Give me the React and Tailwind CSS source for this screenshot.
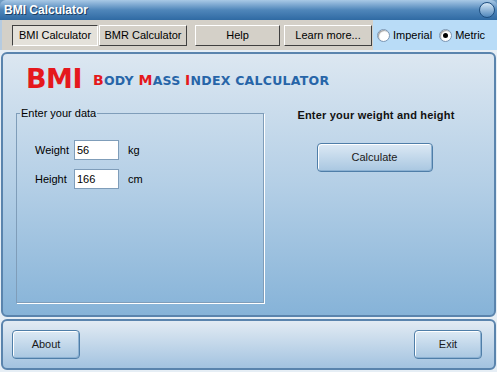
import { useState } from 'react'

const ui = { fontFamily: 'Tahoma, "Liberation Sans", Arial, sans-serif' }
const title = { fontFamily: 'Verdana, "DejaVu Sans", sans-serif' }

const ToolButton = ({ label, pressed, className = '' }) => (
    <button
        className={`h-[21px] text-[11px] text-black bg-[#d4d0c8] border ${
            pressed
                ? 'border-t-[#404040] border-l-[#404040] border-b-white border-r-white bg-[#e4e1da]'
                : 'border-t-white border-l-white border-b-[#404040] border-r-[#404040]'
        } ${className}`}
    >
        {label}
    </button>
)

const GlassButton = ({ label, className = '' }) => (
    <button
        className={`h-[29px] rounded-[4px] border border-[#4f7ea8] bg-gradient-to-b from-[#dce9f4] to-[#a9c7e1] text-[11px] text-[#1a1a1a] shadow-[inset_1px_1px_0_#ffffff,inset_-1px_-1px_0_#8cb1d2] ${className}`}
    >
        {label}
    </button>
)

const Radio = ({ label, checked }) => (
    <label className="flex items-center gap-[3px] text-[11px] text-black">
        <span className="w-[13px] h-[13px] rounded-full bg-white border border-[#7a96b4] flex items-center justify-center shadow-[inset_1px_1px_1px_#a0a0a0]">
            {checked && <span className="w-[5px] h-[5px] rounded-full bg-black" />}
        </span>
        {label}
    </label>
)

export default function App() {
    const [weight, setWeight] = useState('56')
    const [height, setHeight] = useState('166')

    return (
        <div style={ui} className="w-[497px] h-[372px] flex flex-col bg-[#6f9cc4] overflow-hidden">
            {/* Title bar */}
            <div className="h-[20px] shrink-0 flex items-center justify-between pl-[4px] pr-[2px] bg-gradient-to-b from-[#a9c9e6] via-[#4f86ba] to-[#2f6aa3] rounded-t-[6px]">
                <span className="text-[12px] font-bold text-white [text-shadow:1px_1px_0_#1d3f63]">BMI Calculator</span>
                <span className="w-[16px] h-[16px] rounded-full bg-gradient-to-b from-[#d6e8f6] to-[#4f87bb] border border-[#1f4f80]" />
            </div>

            {/* Toolbar */}
            <div className="h-[30px] shrink-0 flex bg-[#d4d0c8] border-l-2 border-[#b6cbe0]">
                <div className="flex-1 flex items-center pl-[10px] pt-[1px]">
                    <ToolButton label="BMI Calculator" pressed className="w-[86px]" />
                    <ToolButton label="BMR Calculator" className="w-[88px] ml-[1px]" />
                    <ToolButton label="Help" className="w-[85px] ml-[8px]" />
                    <ToolButton label="Learn more..." className="w-[88px] ml-[4px]" />
                </div>
                <div className="w-[124px] flex items-center gap-[7px] pl-[4px] bg-[#b9dcf7]">
                    <Radio label="Imperial" />
                    <Radio label="Metric" checked />
                </div>
            </div>

            {/* Main panel */}
            <div className="flex-1 flex flex-col bg-[#e6eef5] pt-[2px] px-[1px]">
                <div className="flex-1 rounded-[6px] border-2 border-[#5a84ad] bg-gradient-to-b from-[#dce7f1] via-[#b4cfe6] to-[#86b3d8] flex flex-col px-[13px] pt-[8px] pb-[12px]">
                    <div className="flex items-end gap-[11px] pl-[10px] h-[30px]" style={title}>
                        <span className="text-[27px] leading-none font-bold text-[#e5181d] tracking-[-0.5px]">BMI</span>
                        <span className="text-[12.5px] font-bold text-[#2765a8] pb-[1px] tracking-[0.25px]">
                            <span className="text-[#e5181d] text-[14px]">B</span>ODY{' '}
                            <span className="text-[#e5181d] text-[14px]">M</span>ASS{' '}
                            <span className="text-[#e5181d] text-[14px]">I</span>NDEX CALCULATOR
                        </span>
                    </div>

                    <div className="flex-1 flex mt-[13px]">
                        {/* Group box */}
                        <fieldset className="w-[248px] border border-[#7f9db9] shadow-[1px_1px_0_#ffffff] px-[18px] pt-[18px] m-0">
                            <legend className="text-[11px] text-black px-[1px] -ml-[15px]">Enter your data</legend>
                            <div className="flex items-center h-[21px]">
                                <span className="w-[39px] text-[11px] text-black">Weight</span>
                                <input
                                    value={weight}
                                    onChange={(e) => setWeight(e.target.value)}
                                    className="w-[45px] h-[20px] bg-white border border-[#7f9db9] text-[11px] px-[2px] outline-none"
                                />
                                <span className="ml-[9px] text-[11px] text-black">kg</span>
                            </div>
                            <div className="flex items-center h-[21px] mt-[8px]">
                                <span className="w-[39px] text-[11px] text-black">Height</span>
                                <input
                                    value={height}
                                    onChange={(e) => setHeight(e.target.value)}
                                    className="w-[45px] h-[20px] bg-white border border-[#7f9db9] text-[11px] px-[2px] outline-none"
                                />
                                <span className="ml-[9px] text-[11px] text-black">cm</span>
                            </div>
                        </fieldset>

                        {/* Right side */}
                        <div className="flex-1 flex flex-col items-center pt-[2px]">
                            <p className="text-[11px] font-bold text-[#111] ml-[7px] tracking-[0.2px]">Enter your weight and height</p>
                            <GlassButton label="Calculate" className="w-[116px] mt-[19px] ml-[4px]" />
                        </div>
                    </div>
                </div>

                {/* Bottom panel */}
                <div className="h-[51px] shrink-0 mt-[2px] mb-[2px] rounded-[6px] border-2 border-[#5a84ad] bg-gradient-to-b from-[#e2ebf3] to-[#a3c3e0] flex items-center justify-between pl-[9px] pr-[12px]">
                    <GlassButton label="About" className="w-[68px]" />
                    <GlassButton label="Exit" className="w-[68px]" />
                </div>
            </div>
        </div>
    )
}
